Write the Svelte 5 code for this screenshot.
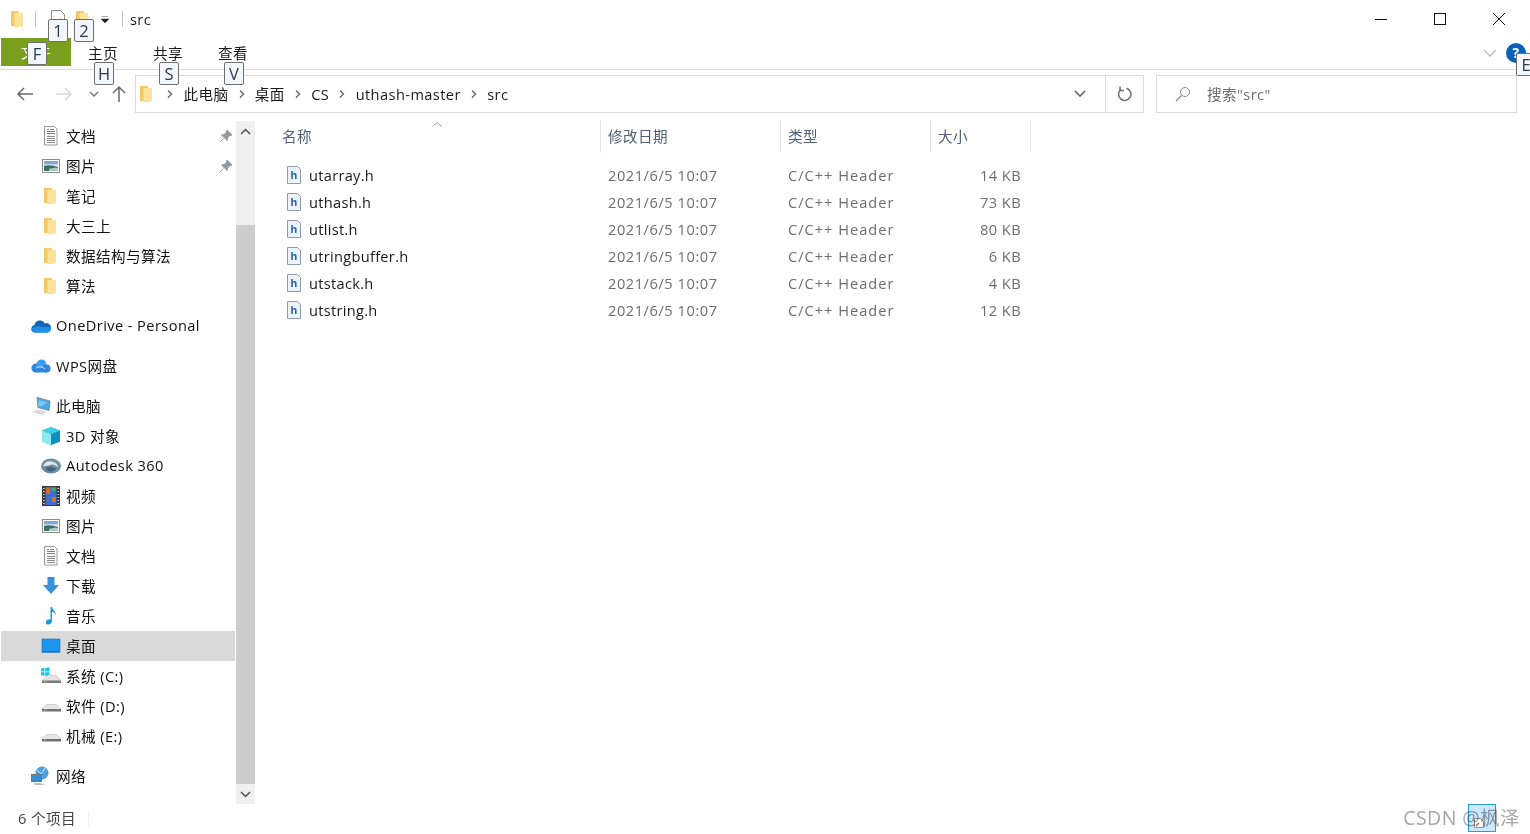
<script lang="ts">
  const top = [
    { icon: "doc", label: "文档", pin: true },
    { icon: "pic", label: "图片", pin: true },
    { icon: "folder", label: "笔记" },
    { icon: "folder", label: "大三上" },
    { icon: "folder", label: "数据结构与算法" },
    { icon: "folder", label: "算法" }
  ];
  const pc = [
    { icon: "cube", label: "3D 对象" },
    { icon: "autodesk", label: "Autodesk 360" },
    { icon: "video", label: "视频" },
    { icon: "pic", label: "图片" },
    { icon: "doc", label: "文档" },
    { icon: "down", label: "下载" },
    { icon: "music", label: "音乐" },
    { icon: "desktop", label: "桌面", active: true },
    { icon: "sys", label: "系统 (C:)" },
    { icon: "drive", label: "软件 (D:)" },
    { icon: "drive", label: "机械 (E:)" }
  ];
  const files = [
    { name: "utarray.h", size: "14 KB" },
    { name: "uthash.h", size: "73 KB" },
    { name: "utlist.h", size: "80 KB" },
    { name: "utringbuffer.h", size: "6 KB" },
    { name: "utstack.h", size: "4 KB" },
    { name: "utstring.h", size: "12 KB" }
  ];
  const tips = [
    { key: "1", cls: "k1" },
    { key: "2", cls: "k2" },
    { key: "F", cls: "kf" },
    { key: "H", cls: "kh" },
    { key: "S", cls: "ks" },
    { key: "V", cls: "kv" },
    { key: "E", cls: "ke" }
  ];
</script>

{#snippet icon(kind: string)}
  <svg class="ico" width="20" height="20" viewBox="0 0 20 20">
    {#if kind === "folder"}
      <path d="M3 2h7l1 1v15l-8-1z" fill="#f4c868" />
      <path d="M6.500 4H15v13.500H6.500z" fill="#fde39a" />
    {:else if kind === "doc"}
      <path d="M3.500 .5h10l2.500 2.500v16H3.500z" fill="#fff" stroke="#9a9a9a" />
      <path d="M6 3.500h2M9 3.500h4M6 5.500h8M6 7.500h8" stroke="#1f9bdc" />
      <path d="M6 10.500h8M6 12.500h8M6 14.500h8M6 16.500h8" stroke="#8a8a8a" />
    {:else if kind === "pic"}
      <rect x="1.500" y="3.500" width="17" height="13" fill="#fff" stroke="#8e8e8e" />
      <rect x="3" y="5" width="14" height="5" fill="#7da9d4" />
      <rect x="3" y="8" width="14" height="2" fill="#c8dcec" />
      <path d="M3 10q5-2 14 1v4H3z" fill="#3f6f63" />
      <path d="M8 13q5-2 9-1v3H8z" fill="#a7c4c8" />
    {:else if kind === "cube"}
      <path d="M10 1l9 3.500v11L10 19l-9-3.500v-11z" fill="#27b6d6" />
      <path d="M1 4.500L10 8v11l-9-3.500z" fill="#8fe8ef" />
      <path d="M10 8l9-3.500v11L10 19z" fill="#0f8fc0" />
      <path d="M1 4.500L10 1l9 3.500L10 8z" fill="#3fcfe0" />
    {:else if kind === "autodesk"}
      <ellipse cx="10" cy="10" rx="10" ry="7.500" fill="#6f8fa2" />
      <path d="M2 10q3-6 9-4.500t6 6q-4-4-8-2.500T2 10z" fill="#dfe7ea" />
      <path d="M5 12q4-2 7-.5t4 .5q-3 4-7 3.500T5 12z" fill="#43637a" />
    {:else if kind === "video"}
      <rect x="1" y="0" width="18" height="20" fill="#3a3a3a" />
      <rect x="4.500" y="1" width="11" height="18" fill="#3d6fd0" />
      <path d="M5 2h4v6H5zM11 11h4v5h-4z" fill="#d96a2c" />
      <path d="M10 2h5v3h-5z" fill="#4ea34e" />
      <path d="M2 2.500h1.500M2 5.500h1.500M2 8.500h1.500M2 11.500h1.500M2 14.500h1.500M2 17.500h1.500M16.500 2.500H18M16.500 5.500H18M16.500 8.500H18M16.500 11.500H18M16.500 14.500H18M16.500 17.500H18" stroke="#ddd" />
    {:else if kind === "down"}
      <path d="M6.500 1h7v8H18l-8 9-8-9h4.500z" fill="#3b8fdc" />
    {:else if kind === "music"}
      <path d="M9.500 1h1.500c.5 3 4 4 4 8-1-2-2.500-3-4-3.300V15c0 2.200-2 3.500-4 3.500S4.500 17 5 15.500 7.500 13 9.500 13.500z" fill="#1a9be6" />
    {:else if kind === "desktop"}
      <rect x="1" y="3" width="18" height="13.500" fill="#1e96ee" />
      <rect x="1" y="15.500" width="18" height="1" fill="#0e5fae" />
      <path d="M1 3h18M1 3v13M19 3v13" fill="none" stroke="#0f6fc0" stroke-width=".6" />
    {:else if kind === "sys"}
      <path d="M0 2.500l3.500-.5v3.500H0zM4.200 2l4.300-.8v4.300H4.200zM0 6.200h3.500v3.500L0 9.200zM4.200 6.200h4.300v4.300l-4.300-.7z" fill="#16c3ee" />
      <path d="M1 14l6-5h8l5 5v1H1z" fill="#e2e2e2" stroke="#bcbcbc" stroke-width=".5" />
      <path d="M1 14.500h19V17H1z" fill="#7a7a7a" />
      <rect x="3" y="15" width="2.500" height="1.200" fill="#7ecb6a" />
    {:else if kind === "drive"}
      <path d="M1 12.500l5-4h9l5 4v1H1z" fill="#e6e6e6" stroke="#b5b5b5" stroke-width=".5" />
      <path d="M1 13h19v2.500H1z" fill="#707070" />
      <rect x="3" y="13.500" width="2.500" height="1.200" fill="#7ecb6a" />
    {:else if kind === "cloud"}
      <path d="M4 16.500a3.800 3.800 0 0 1-.5-7.500 5.500 5.500 0 0 1 10.300-1.500A4.500 4.500 0 0 1 20 12c0 2.500-1.800 4.500-4 4.500z" fill="#0f66b8" />
      <path d="M0 13q5-3.500 9-2.500t11 .5c.5 3-1.800 5.500-4 5.500H4c-2 0-3.700-1.500-4-3.500z" fill="#1c8fe6" />
    {:else if kind === "wps"}
      <circle cx="5" cy="12" r="4.500" fill="#2f86e0" />
      <circle cx="10.500" cy="8.500" r="5" fill="#3f9cf0" />
      <circle cx="15.500" cy="12.500" r="4" fill="#2f86e0" />
      <rect x="5" y="12" width="11" height="4.500" fill="#2f86e0" />
      <path d="M5 12q5-3 9 1" fill="none" stroke="#cfe6fb" />
    {:else if kind === "pc"}
      <path d="M6 1.500l13 3.500-1 9.500-11-3z" fill="#45a8e6" stroke="#7b8f9c" />
      <path d="M8 4l9 2.500-7 4-3-.8z" fill="#7cc6f0" />
      <path d="M1 16l6-2.500 9 2.500-5 3z" fill="#d6dadd" />
    {:else if kind === "net"}
      <circle cx="11" cy="7" r="6.500" fill="#4f9fdc" />
      <path d="M6 4q4 3 5 7M14 2q-2 5-7 8" stroke="#d4ecfa" fill="none" />
      <rect x=".5" y="8.500" width="10" height="7" fill="#3b8fd0" stroke="#66757f" />
      <path d="M3 17h6l5 2H3z" fill="#b8bec2" />
    {/if}
  </svg>
{/snippet}

{#snippet fileIcon()}
  <svg class="ico" width="16" height="18" viewBox="0 0 16 18">
    <path d="M1.500.5h10l3 3v14h-13z" fill="#eef2fa" stroke="#8f9bb0" />
    <text x="8" y="12.500" class="h-glyph" text-anchor="middle">h</text>
  </svg>
{/snippet}

{#snippet chevron()}
  <svg class="sep" width="8" height="10" viewBox="0 0 8 10"><path d="M2 1.500L5.500 5 2 8.500" fill="none" stroke="#5f5f5f" stroke-width="1.300" /></svg>
{/snippet}

<div class="window">
  <header class="titlebar">
    <div class="tb-left">
      <span class="small-folder">{@render icon("folder")}</span>
      <span class="tb-line"></span>
      <svg width="16" height="18" viewBox="0 0 16 18"><path d="M1.500.5h9l4 4v13h-13z" fill="#fff" stroke="#8d8d8d" /><path d="M10 9l3 3" stroke="#d9602a" stroke-width="2" /></svg>
      <span class="small-folder second">{@render icon("folder")}</span>
      <svg class="caret" width="8" height="7" viewBox="0 0 8 7"><path d="M1 .5h6M0 3h8l-4 4z" fill="#222" stroke="#222" stroke-width=".4" /></svg>
      <span class="tb-line two"></span>
      <span class="title">src</span>
    </div>
    <div class="caption">
      <svg width="12" height="12" viewBox="0 0 12 12"><path d="M0 6.500h12" stroke="#111" stroke-width="1" /></svg>
      <svg width="12" height="12" viewBox="0 0 12 12"><rect x=".5" y=".5" width="11" height="11" fill="none" stroke="#111" /></svg>
      <svg width="12" height="12" viewBox="0 0 12 12"><path d="M0 0l12 12M12 0L0 12" stroke="#111" /></svg>
    </div>
  </header>

  <nav class="ribbon">
    <div class="tab-file">文件</div>
    <div class="tabs">
      <span>主页</span>
      <span>共享</span>
      <span>查看</span>
    </div>
    <div class="ribbon-right">
      <svg width="14" height="8" viewBox="0 0 14 8"><path d="M1 1l6 6 6-6" fill="none" stroke="#b9b9b9" stroke-width="1.300" /></svg>
      <span class="help">?</span>
    </div>
  </nav>

  <div class="addressrow">
    <div class="navbtns">
      <svg width="18" height="14" viewBox="0 0 18 14"><path d="M17 7H2M8 1L2 7l6 6" fill="none" stroke="#6b6b6b" stroke-width="1.500" /></svg>
      <svg class="fwd" width="18" height="14" viewBox="0 0 18 14"><path d="M1 7h15M10 1l6 6-6 6" fill="none" stroke="#d9d9d9" stroke-width="1.500" /></svg>
      <svg class="recent" width="10" height="7" viewBox="0 0 10 7"><path d="M1 1l4 4 4-4" fill="none" stroke="#777" stroke-width="1.500" /></svg>
      <svg class="up" width="14" height="18" viewBox="0 0 14 18"><path d="M7 17V2M1 8l6-6 6 6" fill="none" stroke="#6b6b6b" stroke-width="1.500" /></svg>
    </div>
    <div class="address">
      <div class="crumbs">
        <span class="crumb-folder">{@render icon("folder")}</span>
        {@render chevron()}
        <span>此电脑</span>
        {@render chevron()}
        <span>桌面</span>
        {@render chevron()}
        <span>CS</span>
        {@render chevron()}
        <span>uthash-master</span>
        {@render chevron()}
        <span>src</span>
      </div>
      <div class="addr-drop">
        <svg width="12" height="8" viewBox="0 0 12 8"><path d="M1 1l5 5 5-5" fill="none" stroke="#666" stroke-width="1.600" /></svg>
      </div>
      <div class="refresh">
        <svg width="16" height="16" viewBox="0 0 16 16"><path d="M9.500 2.300A6.200 6.200 0 1 1 4 3.300" fill="none" stroke="#6f6f6f" stroke-width="1.500" /><path d="M3 .5v4h4" fill="none" stroke="#6f6f6f" stroke-width="1.500" /></svg>
      </div>
    </div>
    <div class="search">
      <svg width="16" height="16" viewBox="0 0 16 16"><circle cx="10" cy="6" r="4.500" fill="none" stroke="#8a8a8a" /><path d="M6.500 9.500L1 15" stroke="#8a8a8a" stroke-width="1.200" /></svg>
      <span>搜索"src"</span>
    </div>
  </div>

  <main class="body">
    <aside class="nav">
      <section class="group">
        {#each top as item}
          <div class="row sub">
            {@render icon(item.icon)}
            <span>{item.label}</span>
            {#if item.pin}
              <svg class="pin" width="14" height="14" viewBox="0 0 14 14"><path d="M8 1l5 5-2 .5-2.500 2.500-.3 2.500L2.500 6l2.500-.3L7.500 3.200zM4.500 9.500L1 13" fill="#8f99a3" stroke="#8f99a3" /></svg>
            {/if}
          </div>
        {/each}
      </section>
      <section class="group">
        <div class="row">{@render icon("cloud")}<span>OneDrive - Personal</span></div>
      </section>
      <section class="group">
        <div class="row">{@render icon("wps")}<span>WPS网盘</span></div>
      </section>
      <section class="group">
        <div class="row">{@render icon("pc")}<span>此电脑</span></div>
        {#each pc as item}
          <div class="row sub" class:active={item.active}>
            {@render icon(item.icon)}
            <span>{item.label}</span>
          </div>
        {/each}
      </section>
      <section class="group">
        <div class="row">{@render icon("net")}<span>网络</span></div>
      </section>
    </aside>

    <div class="scrollbar">
      <div class="sb-btn"><svg width="11" height="7" viewBox="0 0 11 7"><path d="M1 6l4.500-4.500L10 6" fill="none" stroke="#505050" stroke-width="1.500" /></svg></div>
      <div class="sb-space"></div>
      <div class="sb-thumb"></div>
      <div class="sb-btn"><svg width="11" height="7" viewBox="0 0 11 7"><path d="M1 1l4.500 4.500L10 1" fill="none" stroke="#505050" stroke-width="1.500" /></svg></div>
    </div>

    <div class="content">
      <div class="columns">
        <div class="col name-col">
          名称
          <svg class="sort" width="10" height="5" viewBox="0 0 10 5"><path d="M.5 4.500L5 .5l4.500 4" fill="none" stroke="#9a9a9a" /></svg>
        </div>
        <div class="col">修改日期</div>
        <div class="col">类型</div>
        <div class="col">大小</div>
      </div>
      <div class="files">
        {#each files as file}
          <div class="file">
            <div class="fname">{@render fileIcon()}<span>{file.name}</span></div>
            <div class="fdate">2021/6/5 10:07</div>
            <div class="ftype">C/C++ Header</div>
            <div class="fsize">{file.size}</div>
          </div>
        {/each}
      </div>
    </div>
  </main>

  <footer class="status">
    <span class="count">6 个项目</span>
    <span class="status-line"></span>
    <div class="watermark">CSDN @枫泽</div>
  </footer>

  {#each tips as tip}
    <div class="keytip {tip.cls}">{tip.key}</div>
  {/each}
  <div class="sel-icon">
    <svg width="10" height="10" viewBox="0 0 10 10"><path d="M.5.5h6l3 3v6h-9z" fill="#fff" stroke="#8d8d8d" /><path d="M2 8l3-3" stroke="#d9602a" stroke-width="1.500" /></svg>
  </div>
</div>

<style>
  :global(body) {
    margin: 0;
    background: #fff;
  }

  .window {
    position: relative;
    display: flex;
    flex-direction: column;
    width: 1530px;
    height: 834px;
    overflow: hidden;
    background: #fff;
    color: #1a1a1a;
    font-family: "Open Sans", "Noto Sans CJK SC", sans-serif;
    font-size: 14.600px;
    letter-spacing: 0.42px;
  }

  .ico {
    flex: none;
  }

  /* title bar */
  .titlebar {
    display: flex;
    justify-content: space-between;
    align-items: center;
    height: 38px;
  }

  .tb-left {
    display: flex;
    align-items: center;
    padding-left: 8px;
  }

  .small-folder {
    display: flex;
    width: 20px;
  }

  .small-folder.second {
    margin-left: 7px;
  }

  .tb-line {
    width: 1px;
    height: 16px;
    margin: 0 14px 0 7px;
    background: #c4c4c4;
  }

  .tb-line.two {
    margin: 0 7px 0 13px;
  }

  .caret {
    margin-left: 8px;
  }

  .caption {
    display: flex;
    gap: 47px;
    padding-right: 25px;
  }

  /* ribbon */
  .ribbon {
    display: flex;
    align-items: flex-start;
    height: 31px;
    border-bottom: 1px solid #dadada;
  }

  .tab-file {
    width: 70px;
    height: 28px;
    margin-left: 1px;
    background: #7a9e1e;
    color: #fff;
    line-height: 28px;
    text-align: center;
  }

  .tabs {
    display: flex;
    gap: 35px;
    padding: 4px 0 0 17px;
  }

  .ribbon-right {
    display: flex;
    align-items: center;
    gap: 9px;
    margin-left: auto;
    padding: 5px 4px 0 0;
  }

  .help {
    width: 20px;
    height: 20px;
    border-radius: 50%;
    background: #0a62b8;
    color: #fff;
    font-size: 14px;
    font-weight: 700;
    line-height: 20px;
    text-align: center;
  }

  /* address row */
  .addressrow {
    display: flex;
    align-items: center;
    height: 38px;
    margin-top: 5px;
    padding-bottom: 2px;
  }

  .navbtns {
    display: flex;
    align-items: center;
    width: 135px;
    padding-left: 16px;
    box-sizing: border-box;
  }

  .fwd {
    margin-left: 21px;
  }

  .recent {
    margin-left: 16px;
  }

  .up {
    margin-left: 13px;
  }

  .address {
    display: flex;
    align-items: stretch;
    width: 1009px;
    height: 38px;
    box-sizing: border-box;
    border: 1px solid #d9d9d9;
  }

  .crumbs {
    display: flex;
    flex: 1;
    align-items: center;
    gap: 9.200px;
    padding-left: 1px;
  }

  .crumbs span:not(.crumb-folder),
  .search span {
    margin-bottom: 1px;
  }

  .crumb-folder {
    display: flex;
    width: 20px;
  }

  .sep {
    flex: none;
  }

  .addr-drop {
    display: flex;
    align-items: center;
    padding-right: 19px;
  }

  .refresh {
    display: flex;
    align-items: center;
    justify-content: center;
    width: 38px;
    padding-left: 1px;
    border-left: 1px solid #d9d9d9;
    box-sizing: border-box;
  }

  .search {
    display: flex;
    align-items: center;
    gap: 16px;
    width: 361px;
    height: 38px;
    margin-left: 12px;
    padding-left: 18px;
    box-sizing: border-box;
    border: 1px solid #d9d9d9;
    color: #6d6d6d;
  }

  /* main */
  .body {
    display: flex;
    flex: 1;
    min-height: 0;
    padding-top: 5px;
  }

  .nav {
    width: 236px;
    padding-top: 1px;
  }

  .group + .group {
    margin-top: 10px;
  }

  .row {
    display: flex;
    align-items: center;
    gap: 5px;
    height: 30px;
    margin-left: 1px;
    padding-left: 30px;
    color: #111;
  }

  .row > span {
    margin-bottom: 2px;
  }

  .row.sub {
    padding-left: 40px;
  }

  .row.active {
    margin-right: 1px;
    background: #d9d9d9;
  }

  .pin {
    margin-left: auto;
    margin-right: 3px;
  }

  .scrollbar {
    display: flex;
    flex-direction: column;
    width: 19px;
    margin-top: 1px;
    background: #f0f0f0;
  }

  .sb-btn {
    display: flex;
    align-items: center;
    justify-content: center;
    height: 20px;
  }

  .sb-space {
    height: 84px;
  }

  .sb-thumb {
    flex: 1;
    background: #cdcdcd;
  }

  .content {
    flex: 1;
    padding-left: 20px;
  }

  .columns {
    display: grid;
    grid-template-columns: 326px 180px 150px 100px;
    width: 756px;
    height: 33px;
  }

  .col {
    position: relative;
    padding-left: 7px;
    border-right: 1px solid #e5e5e5;
    color: #4f5f75;
    line-height: 33px;
  }

  .sort {
    position: absolute;
    top: 2px;
    left: 157px;
  }

  .files {
    margin-top: 8px;
  }

  .file {
    display: grid;
    grid-template-columns: 326px 180px 150px 90px;
    align-items: center;
    height: 27px;
    color: #6d6d6d;
  }

  .file > div {
    padding-left: 7px;
  }

  .file .fname {
    display: flex;
    align-items: center;
    gap: 7px;
    padding-left: 11px;
    color: #1a1a1a;
    letter-spacing: 0.3px;
  }

  .fdate {
    letter-spacing: 0.56px;
  }

  .ftype {
    letter-spacing: 1px;
  }

  .file .fsize {
    padding: 0;
    text-align: right;
  }

  :global(.h-glyph) {
    fill: #1c5fb4;
    font-family: "Liberation Sans", sans-serif;
    font-size: 11px;
    font-weight: 700;
  }

  /* status */
  .status {
    display: flex;
    align-items: center;
    height: 30px;
    padding: 0 10px 0 18px;
    color: #444;
  }

  .count {
    margin-bottom: 3px;
  }

  .status-line {
    width: 1px;
    height: 14px;
    margin-left: 12px;
    background: #f0f0f0;
  }

  .watermark {
    margin-bottom: 6px;
    margin-left: auto;
    color: #a6a6a6;
    font-size: 19.500px;
  }

  /* overlays */
  .keytip {
    position: absolute;
    width: 18px;
    height: 21px;
    border: 1px solid #6f6f6f;
    border-radius: 2px;
    background: #f3f6fb;
    color: #2a3a50;
    font-size: 16.500px;
    letter-spacing: 0;
    line-height: 21px;
    text-align: center;
  }

  .k1 { left: 48px; top: 19px; }
  .k2 { left: 74px; top: 19px; }
  .kf { left: 27px; top: 42px; }
  .kh { left: 94px; top: 62px; }
  .ks { left: 159px; top: 62px; }
  .kv { left: 224px; top: 62px; }
  .ke { left: 1516px; top: 53px; }

  .sel-icon {
    position: absolute;
    left: 1468px;
    top: 804px;
    display: flex;
    align-items: flex-end;
    width: 21px;
    height: 23px;
    padding: 0 0 3px 5px;
    border: 1px solid #2a9bd8;
    background: #cce8ff;
    mix-blend-mode: multiply;
  }
</style>
